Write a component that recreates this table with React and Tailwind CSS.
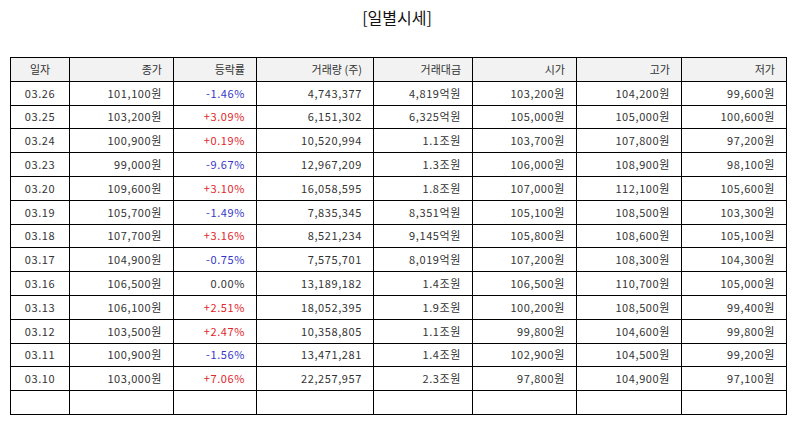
const rows = [
  ["03.26", "101,100원", "-1.46%", "4,743,377", "4,819억원", "103,200원", "104,200원", "99,600원"],
  ["03.25", "103,200원", "+3.09%", "6,151,302", "6,325억원", "105,000원", "105,000원", "100,600원"],
  ["03.24", "100,900원", "+0.19%", "10,520,994", "1.1조원", "103,700원", "107,800원", "97,200원"],
  ["03.23", "99,000원", "-9.67%", "12,967,209", "1.3조원", "106,000원", "108,900원", "98,100원"],
  ["03.20", "109,600원", "+3.10%", "16,058,595", "1.8조원", "107,000원", "112,100원", "105,600원"],
  ["03.19", "105,700원", "-1.49%", "7,835,345", "8,351억원", "105,100원", "108,500원", "103,300원"],
  ["03.18", "107,700원", "+3.16%", "8,521,234", "9,145억원", "105,800원", "108,600원", "105,100원"],
  ["03.17", "104,900원", "-0.75%", "7,575,701", "8,019억원", "107,200원", "108,300원", "104,300원"],
  ["03.16", "106,500원", "0.00%", "13,189,182", "1.4조원", "106,500원", "110,700원", "105,000원"],
  ["03.13", "106,100원", "+2.51%", "18,052,395", "1.9조원", "100,200원", "108,500원", "99,400원"],
  ["03.12", "103,500원", "+2.47%", "10,358,805", "1.1조원", "99,800원", "104,600원", "99,800원"],
  ["03.11", "100,900원", "-1.56%", "13,471,281", "1.4조원", "102,900원", "104,500원", "99,200원"],
  ["03.10", "103,000원", "+7.06%", "22,257,957", "2.3조원", "97,800원", "104,900원", "97,100원"],
];

const headers = ["일자", "종가", "등락률", "거래량 (주)", "거래대금", "시가", "고가", "저가"];
const widths = [59, 104, 83, 117, 99, 104, 105, 105];

function rateColor(v) {
  if (v.startsWith("+")) return "text-[#e0262b]";
  if (v.startsWith("-")) return "text-[#3636c8]";
  return "text-[#333]";
}

export default function App() {
  return (
    <div className="w-[794px] h-[425px] bg-white font-['Noto_Sans_CJK_KR','Noto_Sans',sans-serif] text-[#333]">
      <h1 className="pt-[6px] text-center text-[16px] leading-[22px] text-[#111]">[일별시세]</h1>
      <div className="px-[10px] pt-[29px]">
        <table className="w-[776px] table-fixed border-collapse text-[11px]">
          <colgroup>
            {widths.map((w, i) => (
              <col key={i} style={{ width: w }} />
            ))}
          </colgroup>
          <thead>
            <tr className="h-[23.8px] bg-[#f2f2f2]">
              {headers.map((h, i) => (
                <th
                  key={h}
                  className={`border border-black px-[11px] font-normal ${i === 0 ? "text-center" : "text-right"}`}
                >
                  {h}
                </th>
              ))}
            </tr>
          </thead>
          <tbody>
            {rows.map((r) => (
              <tr key={r[0]} className="h-[23.8px]">
                {r.map((c, i) => (
                  <td
                    key={i}
                    className={`border border-black px-[11px] leading-none tracking-[0.6px] ${i === 0 ? "text-center" : "text-right"} ${i === 2 ? rateColor(c) : ""}`}
                  >
                    {c}
                  </td>
                ))}
              </tr>
            ))}
            <tr className="h-[23.8px]">
              {widths.map((w, i) => (
                <td key={i} className="border border-black"></td>
              ))}
            </tr>
          </tbody>
        </table>
      </div>
    </div>
  );
}
